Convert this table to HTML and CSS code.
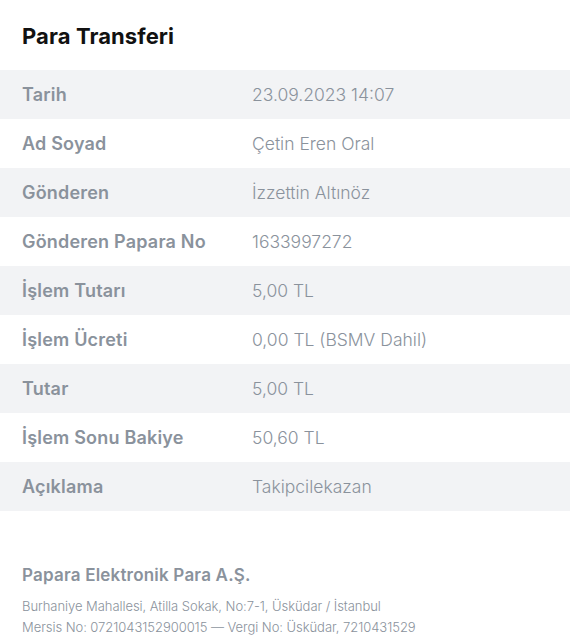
FILE: index.html
```html
<!DOCTYPE html>
<html lang="tr">
<head>
<meta charset="utf-8">
<link rel="stylesheet" href="styles.css">
</head>
<body>
<div class="receipt">
  <h1 class="title">Para Transferi</h1>
  <div class="table">
    <div class="row"><div class="label">Tarih</div><div class="value">23.09.2023 14:07</div></div>
    <div class="row"><div class="label">Ad Soyad</div><div class="value">Çetin Eren Oral</div></div>
    <div class="row"><div class="label">Gönderen</div><div class="value">İzzettin Altınöz</div></div>
    <div class="row"><div class="label">Gönderen Papara No</div><div class="value">1633997272</div></div>
    <div class="row"><div class="label">İşlem Tutarı</div><div class="value">5,00 TL</div></div>
    <div class="row"><div class="label">İşlem Ücreti</div><div class="value">0,00 TL (BSMV Dahil)</div></div>
    <div class="row"><div class="label">Tutar</div><div class="value">5,00 TL</div></div>
    <div class="row"><div class="label">İşlem Sonu Bakiye</div><div class="value">50,60 TL</div></div>
    <div class="row"><div class="label">Açıklama</div><div class="value">Takipcilekazan</div></div>
  </div>
  <div class="footer">
    <div class="company">Papara Elektronik Para A.Ş.</div>
    <div class="address">Burhaniye Mahallesi, Atilla Sokak, No:7-1, Üsküdar / İstanbul<br>Mersis No: 0721043152900015 — Vergi No: Üsküdar, 7210431529</div>
  </div>
</div>
</body>
</html>
```
FILE: styles.css
```css
html, body { margin: 0; padding: 0; background: #fff; }
body { font-family: Inter, "Noto Sans", sans-serif; }
.receipt { width: 570px; }
.title {
  margin: 0;
  padding: 23px 22px 0 22px;
  box-sizing: border-box;
  height: 70px;
  font-size: 22px;
  font-weight: 700;
  color: #111;
  letter-spacing: 0.1px;
  line-height: 27px;
}
.table { display: flex; flex-direction: column; }
.row {
  display: flex;
  align-items: center;
  height: 49px;
  padding-left: 22px;
}
.row:nth-child(odd) { background: #f2f3f5; }
.label {
  width: 230px;
  font-size: 18px;
  font-weight: 600;
  color: #8a929c;
  letter-spacing: 0.2px;
}
.value {
  font-size: 17.5px;
  font-weight: 300;
  color: #8a929c;
  letter-spacing: 0;
}
.footer { padding: 54px 22px 0 22px; }
.company {
  font-size: 17px;
  font-weight: 600;
  color: #8a929c;
  letter-spacing: 0.2px;
}
.address {
  margin-top: 11px;
  font-size: 13px;
  font-weight: 300;
  color: #8a929c;
  line-height: 21px;
  letter-spacing: -0.05px;
}
```
